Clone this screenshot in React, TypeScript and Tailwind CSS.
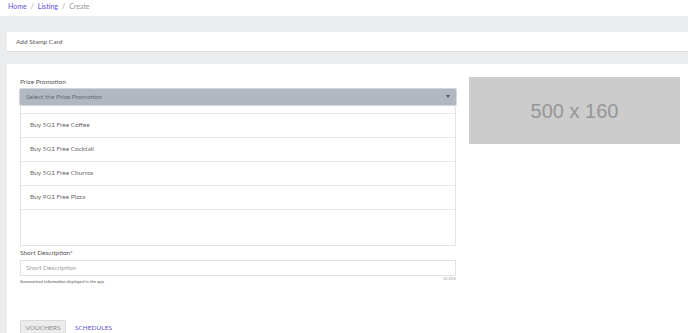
import React from "react";

const promotions = [
  "Buy 5G1 Free Coffee",
  "Buy 5G1 Free Cocktail",
  "Buy 5G1 Free Churros",
  "Buy 9G1 Free Pizza",
];

const App: React.FC = () => {
  return (
    <div className="w-[688px] h-[333px] overflow-hidden bg-[#ebecee] font-['Lato',sans-serif]">
      {/* Breadcrumb */}
      <div className="h-[16px] bg-white flex items-start pt-[3px] pl-[8px] text-[7px] leading-none">
        <span className="text-[#5b53d6]">Home</span>
        <span className="text-[#9a9a9a] mx-[4px]">/</span>
        <span className="text-[#5b53d6]">Listing</span>
        <span className="text-[#9a9a9a] mx-[4px]">/</span>
        <span className="text-[#9a9a9a]">Create</span>
      </div>

      <div className="pl-[7px] pt-[16px]">
        <div className="h-[20px] bg-white border-b border-[#dadbde] flex items-center pl-[9px] text-[6.5px] text-[#555]">
          Add Stamp Card
        </div>

        <div className="mt-[12px] bg-white h-[300px] flex gap-[13px] pl-[13px] pt-[12px]">
          <div className="w-[436px]">
            <div className="text-[6.5px] text-[#555] leading-none mt-[3px] mb-[3px]">
              Prize Promotion
            </div>
            <div className="h-[16px] bg-[#b2b8c2] rounded-[1px] flex items-center justify-between px-[6px] text-[6.5px] text-[#666c75] shadow-[0_0_0_1px_#d4d7dc]">
              <span>Select the Prize Promotion</span>
              <span className="w-0 h-0 border-l-[2.5px] border-r-[2.5px] border-t-[3px] border-l-transparent border-r-transparent border-t-[#555]" />
            </div>
            <div className="h-[141px] border border-t-0 border-[#e4e4e4]">
              <div className="h-[8px]" />
              {promotions.map((p) => (
                <div
                  key={p}
                  className="h-[24px] border-t border-[#e8e8e8] flex items-center pl-[9px] text-[6.5px] text-[#6a6a6a]"
                >
                  {p}
                </div>
              ))}
              <div className="border-t border-[#e8e8e8]" />
            </div>
            <div className="text-[6.5px] text-[#555] leading-none mt-[4px] mb-[4px]">
              Short Description*
            </div>
            <div className="h-[16px] border border-[#e2e2e2] flex items-center pl-[5px] text-[6.5px] text-[#a0a0a0]">
              Short Description
            </div>
            <div className="flex justify-between leading-none mt-[1px]">
              <span className="text-[4.5px] italic text-[#555] mt-[3px]">
                Summarized information displayed in the app
              </span>
              <span className="text-[4.5px] text-[#999]">0/255</span>
            </div>
            <div className="mt-[35px] flex items-start">
              <div className="w-[46px] h-[16px] bg-[#ececed] border border-[#d9d9d9] border-b-0 rounded-t-[2px] flex items-center justify-center text-[6.5px] text-[#8a8a8a]">
                VOUCHERS
              </div>
              <div className="ml-[9px] h-[16px] flex items-center text-[6.5px] text-[#5b53d6]">
                SCHEDULES
              </div>
            </div>
          </div>

          <div className="mt-[1px] w-[211px] h-[67px] bg-[#cccccc] flex items-center justify-center text-[20px] text-[#969696] font-['Liberation_Sans',sans-serif]">
            500 x 160
          </div>
        </div>
      </div>
    </div>
  );
};

export default App;
